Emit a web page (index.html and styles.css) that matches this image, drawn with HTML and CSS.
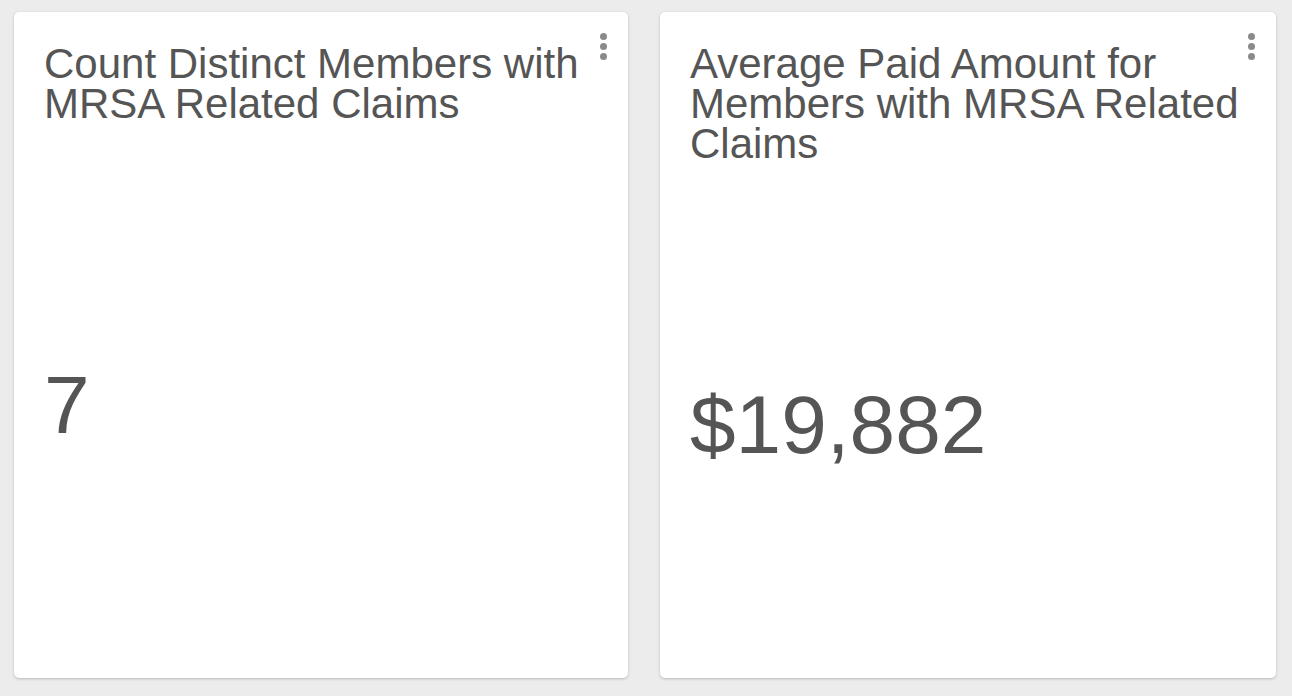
FILE: index.html
```html
<!DOCTYPE html>
<html>
<head>
<meta charset="utf-8">
<link rel="stylesheet" href="styles.css">
</head>
<body>
<div class="grid">
  <div class="card">
    <div class="head">
      <div class="title">Count Distinct Members with MRSA Related Claims</div>
      <div class="menu"><span></span><span></span><span></span></div>
    </div>
    <div class="value">7</div>
  </div>
  <div class="card">
    <div class="head">
      <div class="title">Average Paid Amount for Members with MRSA Related Claims</div>
      <div class="menu"><span></span><span></span><span></span></div>
    </div>
    <div class="value">$19,882</div>
  </div>
</div>
</body>
</html>
```
FILE: styles.css
```css
html, body {
  margin: 0;
  padding: 0;
  background: #ececec;
  font-family: "Liberation Sans", Arial, sans-serif;
  color: #555555;
}
.grid {
  display: grid;
  grid-template-columns: 614px 616px;
  gap: 32px;
  padding: 12px 16px 18px 14px;
  height: 666px;
}
.card {
  background: #ffffff;
  border-radius: 5px;
  box-shadow: 0 1px 3px rgba(0,0,0,0.22);
  display: flex;
  flex-direction: column;
  padding: 32px 17px 0 30px;
}
.head {
  display: flex;
  align-items: flex-start;
  gap: 4px;
}
.title {
  flex: 1;
  font-size: 42px;
  line-height: 40px;
}
.menu {
  display: flex;
  flex-direction: column;
  gap: 3px;
  margin-top: -11px;
  padding: 0 4px;
}
.menu span {
  width: 7px;
  height: 7px;
  border-radius: 50%;
  background: #8a8a8a;
}
.value {
  flex: 1;
  display: flex;
  align-items: center;
  padding-top: 8px;
  font-size: 82px;
  line-height: 92px;
}
```
